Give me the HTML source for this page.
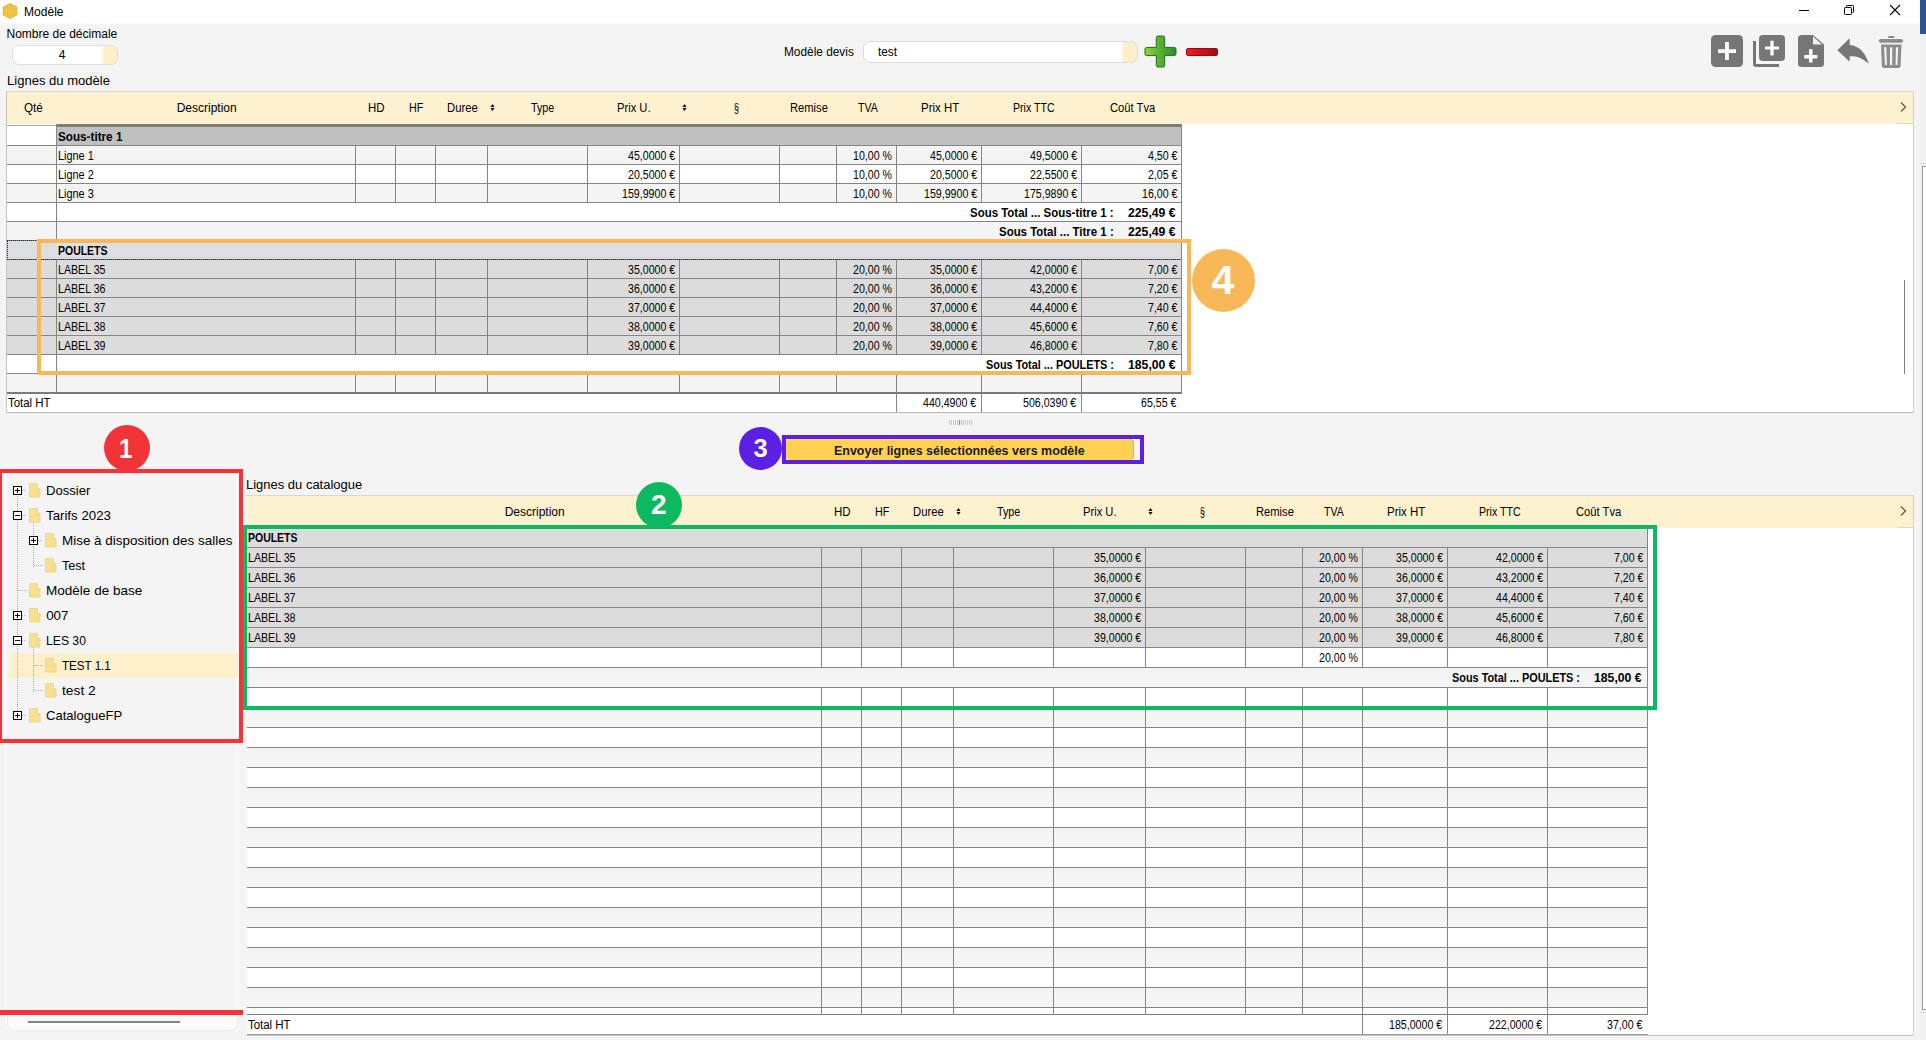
<!DOCTYPE html>
<html lang="fr"><head><meta charset="utf-8"><title>Modèle</title><style>
html,body{margin:0;padding:0}
body{width:1926px;height:1040px;overflow:hidden;position:relative;background:#f4f4f4;font-family:"Liberation Sans",sans-serif;color:#000}
body>div,body>svg,body>span{position:absolute;display:block}
.t{white-space:nowrap;line-height:1;transform-origin:0 0}
</style></head>
<body>
<div style="left:0px;top:0px;width:1920px;height:22px;background:#ffffff;"></div>
<div style="left:0px;top:22px;width:1920px;height:3px;background:linear-gradient(#ffffff,#f4f4f4);"></div>
<svg style="left:2px;top:2px" width="17" height="18" viewBox="0 0 17 18"><defs><radialGradient id="hx" cx="0.5" cy="0.5" r="0.6"><stop offset="0" stop-color="#f1c64a"/><stop offset="0.75" stop-color="#ecc041"/><stop offset="1" stop-color="#d9b350"/></radialGradient></defs><path d="M8 1.2 L15 5 L15 13 L8 16.8 L1 13 L1 5 Z" fill="url(#hx)" stroke="#dcb64c" stroke-width="0.6" stroke-linejoin="round"/></svg>
<span class="t" style="left:23.50px;top:6.14px;font-size:12px;transform:scaleX(1.0036);">Modèle</span>
<div style="left:1799px;top:10px;width:10px;height:1px;background:#000;"></div>
<svg style="left:1843px;top:4px" width="13" height="13" viewBox="0 0 13 13" fill="none" stroke="#000" stroke-width="1"><rect x="1.5" y="3.5" width="7" height="7" rx="0.8"/><path d="M3.5 3.5 V2.3 a0.8 0.8 0 0 1 0.8 -0.8 H9.7 a0.8 0.8 0 0 1 0.8 0.8 V7.7 a0.8 0.8 0 0 1 -0.8 0.8 H8.5"/></svg>
<svg style="left:1889px;top:4px" width="12" height="12" viewBox="0 0 12 12" stroke="#000" stroke-width="1.1"><path d="M1 1 L11 11 M11 1 L1 11"/></svg>
<div style="left:1920px;top:0px;width:6px;height:33.5px;background:#2f5496;"></div>
<div style="left:1920px;top:33.5px;width:6px;height:1007px;background:#f0f0f0;"></div>
<div style="left:1920px;top:163px;width:6px;height:1px;background:#dcdcdc;"></div>
<div style="left:1922px;top:166px;width:6px;height:844px;background:#fdfdfd;border:1px solid #9a9a9a;box-sizing:border-box;"></div>
<div style="left:1920px;top:1012px;width:6px;height:1px;background:#dcdcdc;"></div>
<span class="t" style="left:6.50px;top:27.64px;font-size:12px;">Nombre de décimale</span>
<div style="left:12px;top:45px;width:106px;height:20px;background:linear-gradient(90deg,#fff 0,#fff 88px,#fdefc9 91px);border:1px solid #dedede;border-radius:7px;box-sizing:border-box;"></div>
<span class="t" style="left:58.66px;top:48.64px;font-size:12px;">4</span>
<span class="t" style="left:6.50px;top:74.84px;font-size:12px;transform:scaleX(1.0872);">Lignes du modèle</span>
<span class="t" style="left:784.20px;top:46.04px;font-size:12px;transform:scaleX(0.9872);">Modèle devis</span>
<div style="left:863px;top:41px;width:275px;height:22px;background:linear-gradient(90deg,#fff 0,#fff 257px,#fdefc9 260px);border:1px solid #dcdcdc;border-radius:7px;box-sizing:border-box;"></div>
<span class="t" style="left:878.00px;top:46.04px;font-size:12px;transform:scaleX(0.9823);">test</span>
<svg style="left:1143.5px;top:34.5px" width="33" height="33" viewBox="0 0 33 33"><defs><linearGradient id="gp" x1="0" y1="0" x2="1" y2="0"><stop offset="0" stop-color="#96d640"/><stop offset="0.45" stop-color="#5cb230"/><stop offset="1" stop-color="#2c8c34"/></linearGradient></defs><path d="M13.9 1 h5.2 a1.6 1.6 0 0 1 1.6 1.6 v9.8 h9.7 a1.6 1.6 0 0 1 1.6 1.6 v5 a1.6 1.6 0 0 1 -1.6 1.6 h-9.7 v9.8 a1.6 1.6 0 0 1 -1.6 1.6 h-5.2 a1.6 1.6 0 0 1 -1.6 -1.6 v-9.8 h-9.7 a1.6 1.6 0 0 1 -1.6 -1.6 v-5 a1.6 1.6 0 0 1 1.6 -1.6 h9.7 v-9.8 a1.6 1.6 0 0 1 1.6 -1.6 z" fill="url(#gp)" stroke="#1f6e1c" stroke-width="1"/></svg>
<div style="left:1186px;top:48px;width:32px;height:8px;border-radius:2px;background:linear-gradient(90deg,#f41c1c,#d41218 45%,#9c1018);border:1px solid #8e0c12;box-sizing:border-box;"></div>
<svg style="left:1711px;top:35px" width="32" height="32" viewBox="0 0 32 32"><rect width="32" height="32" rx="4.5" fill="#767676"/><path d="M7 14.2 H25 V18 H7 Z M14.1 7 H17.9 V25 H14.1 Z" fill="#fff"/></svg>
<svg style="left:1753px;top:35px" width="32" height="32" viewBox="0 0 32 32"><rect x="6" y="0" width="26" height="26" rx="4" fill="#767676"/><path d="M1.5 6 V29 a1.5 1.5 0 0 0 1.5 1.5 H26" fill="none" stroke="#767676" stroke-width="3"/><path d="M12 11.5 H26 V14.6 H12 Z M17.4 5.8 H20.6 V20.6 H17.4 Z" fill="#fff"/></svg>
<svg style="left:1798px;top:35px" width="26" height="32" viewBox="0 0 26 32"><path d="M3.5 0 H15 L26 9.5 V28.5 a3.5 3.5 0 0 1 -3.5 3.5 H3.5 a3.5 3.5 0 0 1 -3.5 -3.5 V3.5 a3.5 3.5 0 0 1 3.5 -3.5 z" fill="#767676"/><path d="M15 1.5 V9.5 H24 Z" fill="#f0f0f0"/><path d="M6.3 20 H19.3 V23.4 H6.3 Z M11.1 14.3 H14.5 V27.6 H11.1 Z" fill="#fff"/></svg>
<svg style="left:1837px;top:38px" width="33" height="27" viewBox="0 0 33 27"><path d="M12.7 0.25 L0.4 12.3 L12.7 23.7 V18.2 C19 18 25 19.5 31.7 25.8 C29.5 17 23 7.5 12.7 7 Z" fill="#767676"/></svg>
<svg style="left:1878px;top:35px" width="26" height="34" viewBox="0 0 26 34"><g fill="#8c8c8c"><rect x="10" y="1.1" width="6.5" height="2" rx="1"/><rect x="0.9" y="4.1" width="24.1" height="3.6" rx="1.7"/><path d="M3 9.4 H23.5 L22.6 31 a2 2 0 0 1 -2 1.9 H5.9 a2 2 0 0 1 -2 -1.9 Z"/></g><g fill="#f4f4f4"><path d="M6.1 12.3 H8.3 L8.9 30.1 H7 Z"/><path d="M12 12.3 H14.2 V30.1 H12 Z"/><path d="M18 12.3 H20.2 L19.4 30.1 H17.5 Z"/></g></svg>
<div style="left:7px;top:92px;width:1906px;height:320px;background:#ffffff;"></div>
<div style="left:6px;top:91px;width:1908px;height:1px;background:#dcd6cc;"></div>
<div style="left:6px;top:92px;width:1px;height:321px;background:#c4c4c4;"></div>
<div style="left:1913px;top:92px;width:1px;height:321px;background:#d2d2d2;"></div>
<div style="left:7px;top:412px;width:1907px;height:1px;background:#b8b8b8;"></div>
<div style="left:7px;top:92px;width:1906px;height:31.5px;background:#fef1cf;"></div>
<svg style="left:1899px;top:101px" width="9" height="12" viewBox="0 0 9 12" fill="none" stroke="#5a5548" stroke-width="1.2"><path d="M2 1.5 L6.5 6 L2 10.5"/></svg>
<div style="left:1897px;top:122.5px;width:16px;height:1px;background:#ecd9a0;"></div>
<div style="left:1904px;top:280px;width:1px;height:94px;background:#7d7d7d;"></div>
<span class="t" style="left:23.52px;top:102.24px;font-size:12px;transform:scaleX(0.9694);">Qté</span>
<span class="t" style="left:176.70px;top:102.24px;font-size:12px;">Description</span>
<span class="t" style="left:367.90px;top:102.24px;font-size:12px;transform:scaleX(0.9577);">HD</span>
<span class="t" style="left:409.05px;top:102.24px;font-size:12px;transform:scaleX(0.8939);">HF</span>
<span class="t" style="left:446.85px;top:102.24px;font-size:12px;transform:scaleX(0.9393);">Duree</span>
<span class="t" style="left:531.15px;top:102.24px;font-size:12px;transform:scaleX(0.8956);">Type</span>
<span class="t" style="left:617.45px;top:102.24px;font-size:12px;transform:scaleX(0.9305);">Prix U.</span>
<span class="t" style="left:734.00px;top:102.24px;font-size:12px;transform:scaleX(0.7492);">§</span>
<span class="t" style="left:789.75px;top:102.24px;font-size:12px;transform:scaleX(0.9317);">Remise</span>
<span class="t" style="left:858.35px;top:102.24px;font-size:12px;transform:scaleX(0.8776);">TVA</span>
<span class="t" style="left:920.60px;top:102.24px;font-size:12px;transform:scaleX(0.9551);">Prix HT</span>
<span class="t" style="left:1012.60px;top:102.24px;font-size:12px;transform:scaleX(0.8830);">Prix TTC</span>
<span class="t" style="left:1110.20px;top:102.24px;font-size:12px;transform:scaleX(0.9325);">Coût Tva</span>
<svg style="left:489.7px;top:104px" width="5" height="7" viewBox="0 0 5 7"><path d="M2.5 0 L4.6 2.9 H0.4 Z M2.5 7 L4.6 4.1 H0.4 Z" fill="#111"/></svg>
<svg style="left:681.7px;top:104px" width="5" height="7" viewBox="0 0 5 7"><path d="M2.5 0 L4.6 2.9 H0.4 Z M2.5 7 L4.6 4.1 H0.4 Z" fill="#111"/></svg>
<div style="left:7px;top:126px;width:49px;height:19px;background:#ffffff;"></div>
<div style="left:57px;top:126px;width:1125px;height:19px;background:#c0c0c0;"></div>
<span class="t" style="left:58.20px;top:131.14px;font-size:12px;transform:scaleX(0.9755);font-weight:bold;">Sous-titre 1</span>
<div style="left:7px;top:145px;width:1175px;height:1px;background:#858585;"></div>
<div style="left:7px;top:146px;width:1175px;height:19px;background:#f4f4f4;"></div>
<span class="t" style="left:58.30px;top:149.74px;font-size:12px;transform:scaleX(0.9070);">Ligne 1</span>
<span class="t" style="left:627.55px;top:149.74px;font-size:12px;transform:scaleX(0.8850);">45,0000 €</span>
<span class="t" style="left:852.63px;top:149.74px;font-size:12px;transform:scaleX(0.8850);">10,00 %</span>
<span class="t" style="left:929.55px;top:149.74px;font-size:12px;transform:scaleX(0.8850);">45,0000 €</span>
<span class="t" style="left:1029.55px;top:149.74px;font-size:12px;transform:scaleX(0.8850);">49,5000 €</span>
<span class="t" style="left:1147.77px;top:149.74px;font-size:12px;transform:scaleX(0.8850);">4,50 €</span>
<div style="left:355px;top:146px;width:1px;height:19px;background:#858585;"></div>
<div style="left:395px;top:146px;width:1px;height:19px;background:#858585;"></div>
<div style="left:435px;top:146px;width:1px;height:19px;background:#858585;"></div>
<div style="left:487px;top:146px;width:1px;height:19px;background:#858585;"></div>
<div style="left:587px;top:146px;width:1px;height:19px;background:#858585;"></div>
<div style="left:679px;top:146px;width:1px;height:19px;background:#858585;"></div>
<div style="left:779px;top:146px;width:1px;height:19px;background:#858585;"></div>
<div style="left:836px;top:146px;width:1px;height:19px;background:#858585;"></div>
<div style="left:896px;top:146px;width:1px;height:19px;background:#858585;"></div>
<div style="left:981px;top:146px;width:1px;height:19px;background:#858585;"></div>
<div style="left:1081px;top:146px;width:1px;height:19px;background:#858585;"></div>
<div style="left:7px;top:164px;width:1175px;height:1px;background:#858585;"></div>
<div style="left:7px;top:165px;width:1175px;height:19px;background:#ffffff;"></div>
<span class="t" style="left:58.30px;top:168.74px;font-size:12px;transform:scaleX(0.9070);">Ligne 2</span>
<span class="t" style="left:627.55px;top:168.74px;font-size:12px;transform:scaleX(0.8850);">20,5000 €</span>
<span class="t" style="left:852.63px;top:168.74px;font-size:12px;transform:scaleX(0.8850);">10,00 %</span>
<span class="t" style="left:929.55px;top:168.74px;font-size:12px;transform:scaleX(0.8850);">20,5000 €</span>
<span class="t" style="left:1029.55px;top:168.74px;font-size:12px;transform:scaleX(0.8850);">22,5500 €</span>
<span class="t" style="left:1147.77px;top:168.74px;font-size:12px;transform:scaleX(0.8850);">2,05 €</span>
<div style="left:355px;top:165px;width:1px;height:19px;background:#858585;"></div>
<div style="left:395px;top:165px;width:1px;height:19px;background:#858585;"></div>
<div style="left:435px;top:165px;width:1px;height:19px;background:#858585;"></div>
<div style="left:487px;top:165px;width:1px;height:19px;background:#858585;"></div>
<div style="left:587px;top:165px;width:1px;height:19px;background:#858585;"></div>
<div style="left:679px;top:165px;width:1px;height:19px;background:#858585;"></div>
<div style="left:779px;top:165px;width:1px;height:19px;background:#858585;"></div>
<div style="left:836px;top:165px;width:1px;height:19px;background:#858585;"></div>
<div style="left:896px;top:165px;width:1px;height:19px;background:#858585;"></div>
<div style="left:981px;top:165px;width:1px;height:19px;background:#858585;"></div>
<div style="left:1081px;top:165px;width:1px;height:19px;background:#858585;"></div>
<div style="left:7px;top:183px;width:1175px;height:1px;background:#858585;"></div>
<div style="left:7px;top:184px;width:1175px;height:19px;background:#f4f4f4;"></div>
<span class="t" style="left:58.30px;top:187.74px;font-size:12px;transform:scaleX(0.9070);">Ligne 3</span>
<span class="t" style="left:621.65px;top:187.74px;font-size:12px;transform:scaleX(0.8850);">159,9900 €</span>
<span class="t" style="left:852.63px;top:187.74px;font-size:12px;transform:scaleX(0.8850);">10,00 %</span>
<span class="t" style="left:923.65px;top:187.74px;font-size:12px;transform:scaleX(0.8850);">159,9900 €</span>
<span class="t" style="left:1023.65px;top:187.74px;font-size:12px;transform:scaleX(0.8850);">175,9890 €</span>
<span class="t" style="left:1141.87px;top:187.74px;font-size:12px;transform:scaleX(0.8850);">16,00 €</span>
<div style="left:355px;top:184px;width:1px;height:19px;background:#858585;"></div>
<div style="left:395px;top:184px;width:1px;height:19px;background:#858585;"></div>
<div style="left:435px;top:184px;width:1px;height:19px;background:#858585;"></div>
<div style="left:487px;top:184px;width:1px;height:19px;background:#858585;"></div>
<div style="left:587px;top:184px;width:1px;height:19px;background:#858585;"></div>
<div style="left:679px;top:184px;width:1px;height:19px;background:#858585;"></div>
<div style="left:779px;top:184px;width:1px;height:19px;background:#858585;"></div>
<div style="left:836px;top:184px;width:1px;height:19px;background:#858585;"></div>
<div style="left:896px;top:184px;width:1px;height:19px;background:#858585;"></div>
<div style="left:981px;top:184px;width:1px;height:19px;background:#858585;"></div>
<div style="left:1081px;top:184px;width:1px;height:19px;background:#858585;"></div>
<div style="left:7px;top:202px;width:1175px;height:1px;background:#858585;"></div>
<div style="left:7px;top:203px;width:1175px;height:19px;background:#ffffff;"></div>
<span class="t" style="left:970.00px;top:206.74px;font-size:12px;transform:scaleX(0.9544);font-weight:bold;">Sous Total ... Sous-titre 1 :</span>
<span class="t" style="left:1128.20px;top:206.74px;font-size:12px;transform:scaleX(1.0190);font-weight:bold;">225,49 €</span>
<div style="left:7px;top:221px;width:1175px;height:1px;background:#858585;"></div>
<div style="left:7px;top:222px;width:1175px;height:19px;background:#f4f4f4;"></div>
<span class="t" style="left:998.90px;top:225.74px;font-size:12px;transform:scaleX(0.9539);font-weight:bold;">Sous Total ... Titre 1 :</span>
<span class="t" style="left:1128.20px;top:225.74px;font-size:12px;transform:scaleX(1.0190);font-weight:bold;">225,49 €</span>
<div style="left:7px;top:240px;width:1175px;height:1px;background:#858585;"></div>
<div style="left:7px;top:241px;width:1175px;height:19px;background:#dddee2;"></div>
<span class="t" style="left:58.20px;top:244.74px;font-size:12px;transform:scaleX(0.8734);font-weight:bold;">POULETS</span>
<div style="left:7px;top:259px;width:1175px;height:1px;background:#858585;"></div>
<div style="left:7px;top:260px;width:1175px;height:19px;background:#dcdcdc;"></div>
<span class="t" style="left:58.30px;top:263.74px;font-size:12px;transform:scaleX(0.8860);">LABEL 35</span>
<span class="t" style="left:627.55px;top:263.74px;font-size:12px;transform:scaleX(0.8850);">35,0000 €</span>
<span class="t" style="left:852.63px;top:263.74px;font-size:12px;transform:scaleX(0.8850);">20,00 %</span>
<span class="t" style="left:929.55px;top:263.74px;font-size:12px;transform:scaleX(0.8850);">35,0000 €</span>
<span class="t" style="left:1029.55px;top:263.74px;font-size:12px;transform:scaleX(0.8850);">42,0000 €</span>
<span class="t" style="left:1147.77px;top:263.74px;font-size:12px;transform:scaleX(0.8850);">7,00 €</span>
<div style="left:355px;top:260px;width:1px;height:19px;background:#858585;"></div>
<div style="left:395px;top:260px;width:1px;height:19px;background:#858585;"></div>
<div style="left:435px;top:260px;width:1px;height:19px;background:#858585;"></div>
<div style="left:487px;top:260px;width:1px;height:19px;background:#858585;"></div>
<div style="left:587px;top:260px;width:1px;height:19px;background:#858585;"></div>
<div style="left:679px;top:260px;width:1px;height:19px;background:#858585;"></div>
<div style="left:779px;top:260px;width:1px;height:19px;background:#858585;"></div>
<div style="left:836px;top:260px;width:1px;height:19px;background:#858585;"></div>
<div style="left:896px;top:260px;width:1px;height:19px;background:#858585;"></div>
<div style="left:981px;top:260px;width:1px;height:19px;background:#858585;"></div>
<div style="left:1081px;top:260px;width:1px;height:19px;background:#858585;"></div>
<div style="left:7px;top:278px;width:1175px;height:1px;background:#858585;"></div>
<div style="left:7px;top:279px;width:1175px;height:19px;background:#dcdcdc;"></div>
<span class="t" style="left:58.30px;top:282.74px;font-size:12px;transform:scaleX(0.8860);">LABEL 36</span>
<span class="t" style="left:627.55px;top:282.74px;font-size:12px;transform:scaleX(0.8850);">36,0000 €</span>
<span class="t" style="left:852.63px;top:282.74px;font-size:12px;transform:scaleX(0.8850);">20,00 %</span>
<span class="t" style="left:929.55px;top:282.74px;font-size:12px;transform:scaleX(0.8850);">36,0000 €</span>
<span class="t" style="left:1029.55px;top:282.74px;font-size:12px;transform:scaleX(0.8850);">43,2000 €</span>
<span class="t" style="left:1147.77px;top:282.74px;font-size:12px;transform:scaleX(0.8850);">7,20 €</span>
<div style="left:355px;top:279px;width:1px;height:19px;background:#858585;"></div>
<div style="left:395px;top:279px;width:1px;height:19px;background:#858585;"></div>
<div style="left:435px;top:279px;width:1px;height:19px;background:#858585;"></div>
<div style="left:487px;top:279px;width:1px;height:19px;background:#858585;"></div>
<div style="left:587px;top:279px;width:1px;height:19px;background:#858585;"></div>
<div style="left:679px;top:279px;width:1px;height:19px;background:#858585;"></div>
<div style="left:779px;top:279px;width:1px;height:19px;background:#858585;"></div>
<div style="left:836px;top:279px;width:1px;height:19px;background:#858585;"></div>
<div style="left:896px;top:279px;width:1px;height:19px;background:#858585;"></div>
<div style="left:981px;top:279px;width:1px;height:19px;background:#858585;"></div>
<div style="left:1081px;top:279px;width:1px;height:19px;background:#858585;"></div>
<div style="left:7px;top:297px;width:1175px;height:1px;background:#858585;"></div>
<div style="left:7px;top:298px;width:1175px;height:19px;background:#dcdcdc;"></div>
<span class="t" style="left:58.30px;top:301.74px;font-size:12px;transform:scaleX(0.8860);">LABEL 37</span>
<span class="t" style="left:627.55px;top:301.74px;font-size:12px;transform:scaleX(0.8850);">37,0000 €</span>
<span class="t" style="left:852.63px;top:301.74px;font-size:12px;transform:scaleX(0.8850);">20,00 %</span>
<span class="t" style="left:929.55px;top:301.74px;font-size:12px;transform:scaleX(0.8850);">37,0000 €</span>
<span class="t" style="left:1029.55px;top:301.74px;font-size:12px;transform:scaleX(0.8850);">44,4000 €</span>
<span class="t" style="left:1147.77px;top:301.74px;font-size:12px;transform:scaleX(0.8850);">7,40 €</span>
<div style="left:355px;top:298px;width:1px;height:19px;background:#858585;"></div>
<div style="left:395px;top:298px;width:1px;height:19px;background:#858585;"></div>
<div style="left:435px;top:298px;width:1px;height:19px;background:#858585;"></div>
<div style="left:487px;top:298px;width:1px;height:19px;background:#858585;"></div>
<div style="left:587px;top:298px;width:1px;height:19px;background:#858585;"></div>
<div style="left:679px;top:298px;width:1px;height:19px;background:#858585;"></div>
<div style="left:779px;top:298px;width:1px;height:19px;background:#858585;"></div>
<div style="left:836px;top:298px;width:1px;height:19px;background:#858585;"></div>
<div style="left:896px;top:298px;width:1px;height:19px;background:#858585;"></div>
<div style="left:981px;top:298px;width:1px;height:19px;background:#858585;"></div>
<div style="left:1081px;top:298px;width:1px;height:19px;background:#858585;"></div>
<div style="left:7px;top:316px;width:1175px;height:1px;background:#858585;"></div>
<div style="left:7px;top:317px;width:1175px;height:19px;background:#dcdcdc;"></div>
<span class="t" style="left:58.30px;top:320.74px;font-size:12px;transform:scaleX(0.8860);">LABEL 38</span>
<span class="t" style="left:627.55px;top:320.74px;font-size:12px;transform:scaleX(0.8850);">38,0000 €</span>
<span class="t" style="left:852.63px;top:320.74px;font-size:12px;transform:scaleX(0.8850);">20,00 %</span>
<span class="t" style="left:929.55px;top:320.74px;font-size:12px;transform:scaleX(0.8850);">38,0000 €</span>
<span class="t" style="left:1029.55px;top:320.74px;font-size:12px;transform:scaleX(0.8850);">45,6000 €</span>
<span class="t" style="left:1147.77px;top:320.74px;font-size:12px;transform:scaleX(0.8850);">7,60 €</span>
<div style="left:355px;top:317px;width:1px;height:19px;background:#858585;"></div>
<div style="left:395px;top:317px;width:1px;height:19px;background:#858585;"></div>
<div style="left:435px;top:317px;width:1px;height:19px;background:#858585;"></div>
<div style="left:487px;top:317px;width:1px;height:19px;background:#858585;"></div>
<div style="left:587px;top:317px;width:1px;height:19px;background:#858585;"></div>
<div style="left:679px;top:317px;width:1px;height:19px;background:#858585;"></div>
<div style="left:779px;top:317px;width:1px;height:19px;background:#858585;"></div>
<div style="left:836px;top:317px;width:1px;height:19px;background:#858585;"></div>
<div style="left:896px;top:317px;width:1px;height:19px;background:#858585;"></div>
<div style="left:981px;top:317px;width:1px;height:19px;background:#858585;"></div>
<div style="left:1081px;top:317px;width:1px;height:19px;background:#858585;"></div>
<div style="left:7px;top:335px;width:1175px;height:1px;background:#858585;"></div>
<div style="left:7px;top:336px;width:1175px;height:19px;background:#dcdcdc;"></div>
<span class="t" style="left:58.30px;top:339.74px;font-size:12px;transform:scaleX(0.8860);">LABEL 39</span>
<span class="t" style="left:627.55px;top:339.74px;font-size:12px;transform:scaleX(0.8850);">39,0000 €</span>
<span class="t" style="left:852.63px;top:339.74px;font-size:12px;transform:scaleX(0.8850);">20,00 %</span>
<span class="t" style="left:929.55px;top:339.74px;font-size:12px;transform:scaleX(0.8850);">39,0000 €</span>
<span class="t" style="left:1029.55px;top:339.74px;font-size:12px;transform:scaleX(0.8850);">46,8000 €</span>
<span class="t" style="left:1147.77px;top:339.74px;font-size:12px;transform:scaleX(0.8850);">7,80 €</span>
<div style="left:355px;top:336px;width:1px;height:19px;background:#858585;"></div>
<div style="left:395px;top:336px;width:1px;height:19px;background:#858585;"></div>
<div style="left:435px;top:336px;width:1px;height:19px;background:#858585;"></div>
<div style="left:487px;top:336px;width:1px;height:19px;background:#858585;"></div>
<div style="left:587px;top:336px;width:1px;height:19px;background:#858585;"></div>
<div style="left:679px;top:336px;width:1px;height:19px;background:#858585;"></div>
<div style="left:779px;top:336px;width:1px;height:19px;background:#858585;"></div>
<div style="left:836px;top:336px;width:1px;height:19px;background:#858585;"></div>
<div style="left:896px;top:336px;width:1px;height:19px;background:#858585;"></div>
<div style="left:981px;top:336px;width:1px;height:19px;background:#858585;"></div>
<div style="left:1081px;top:336px;width:1px;height:19px;background:#858585;"></div>
<div style="left:7px;top:354px;width:1175px;height:1px;background:#858585;"></div>
<div style="left:7px;top:355px;width:1175px;height:19px;background:#ffffff;"></div>
<span class="t" style="left:985.60px;top:358.74px;font-size:12px;transform:scaleX(0.9070);font-weight:bold;">Sous Total ... POULETS :</span>
<span class="t" style="left:1128.20px;top:358.74px;font-size:12px;transform:scaleX(1.0190);font-weight:bold;">185,00 €</span>
<div style="left:7px;top:373px;width:1175px;height:1px;background:#858585;"></div>
<div style="left:7px;top:374px;width:1175px;height:19px;background:#f4f4f4;"></div>
<div style="left:355px;top:374px;width:1px;height:19px;background:#858585;"></div>
<div style="left:395px;top:374px;width:1px;height:19px;background:#858585;"></div>
<div style="left:435px;top:374px;width:1px;height:19px;background:#858585;"></div>
<div style="left:487px;top:374px;width:1px;height:19px;background:#858585;"></div>
<div style="left:587px;top:374px;width:1px;height:19px;background:#858585;"></div>
<div style="left:679px;top:374px;width:1px;height:19px;background:#858585;"></div>
<div style="left:779px;top:374px;width:1px;height:19px;background:#858585;"></div>
<div style="left:836px;top:374px;width:1px;height:19px;background:#858585;"></div>
<div style="left:896px;top:374px;width:1px;height:19px;background:#858585;"></div>
<div style="left:981px;top:374px;width:1px;height:19px;background:#858585;"></div>
<div style="left:1081px;top:374px;width:1px;height:19px;background:#858585;"></div>
<div style="left:57px;top:124px;width:1125px;height:2.6px;background:#7f7c78;"></div>
<div style="left:7px;top:125px;width:50px;height:1px;background:#a6a6a6;"></div>
<div style="left:56px;top:124px;width:1px;height:269px;background:#858585;"></div>
<div style="left:1181px;top:126px;width:1px;height:286px;background:#858585;"></div>
<div style="left:7px;top:240px;width:1175px;height:20px;border:1px dotted #222;box-sizing:border-box;background:none"></div>
<div style="left:1181px;top:240px;width:1px;height:20px;background:#858585;"></div>
<div style="left:56px;top:241px;width:1px;height:18px;background:#dddee2;"></div>
<div style="left:7px;top:392px;width:1175px;height:2px;background:#7a7a7a;"></div>
<div style="left:7px;top:394px;width:1175px;height:18px;background:#ffffff;"></div>
<span class="t" style="left:8.40px;top:397.44px;font-size:12px;transform:scaleX(0.9512);">Total HT</span>
<div style="left:896px;top:394px;width:1px;height:18px;background:#858585;"></div>
<div style="left:981px;top:394px;width:1px;height:18px;background:#858585;"></div>
<div style="left:1081px;top:394px;width:1px;height:18px;background:#858585;"></div>
<span class="t" style="left:923.05px;top:397.44px;font-size:12px;transform:scaleX(0.8850);">440,4900 €</span>
<span class="t" style="left:1023.05px;top:397.44px;font-size:12px;transform:scaleX(0.8850);">506,0390 €</span>
<span class="t" style="left:1141.27px;top:397.44px;font-size:12px;transform:scaleX(0.8850);">65,55 €</span>
<div style="left:37px;top:239.2px;width:1154px;height:136px;border:4px solid #f9b858;box-sizing:border-box;background:none"></div>
<div style="left:1191.5px;top:248.8px;width:63px;height:63px;border-radius:50%;background:#f9b858"></div>
<span class="t" style="left:1211.40px;top:260.29px;font-size:41px;font-weight:bold;color:#fff;">4</span>
<div style="left:949px;top:420px;width:1px;height:5px;background:#c9c9c9;"></div>
<div style="left:951px;top:420px;width:1px;height:5px;background:#c9c9c9;"></div>
<div style="left:953px;top:420px;width:1px;height:5px;background:#c9c9c9;"></div>
<div style="left:955px;top:420px;width:1px;height:5px;background:#c9c9c9;"></div>
<div style="left:957px;top:420px;width:1px;height:5px;background:#c9c9c9;"></div>
<div style="left:959px;top:420px;width:1px;height:5px;background:#4f9fc0;"></div>
<div style="left:961px;top:420px;width:1px;height:5px;background:#9cc6d8;"></div>
<div style="left:963px;top:420px;width:1px;height:5px;background:#c9c9c9;"></div>
<div style="left:965px;top:420px;width:1px;height:5px;background:#c9c9c9;"></div>
<div style="left:967px;top:420px;width:1px;height:5px;background:#c9c9c9;"></div>
<div style="left:969px;top:420px;width:1px;height:5px;background:#c9c9c9;"></div>
<div style="left:971px;top:420px;width:1px;height:5px;background:#c9c9c9;"></div>
<div style="left:739px;top:426.8px;width:43px;height:43px;border-radius:50%;background:#5b20e4"></div>
<span class="t" style="left:753.51px;top:436.01px;font-size:25.5px;font-weight:bold;color:#fff;">3</span>
<div style="left:782px;top:434.8px;width:362px;height:29.4px;border:4px solid #5b20e4;box-sizing:border-box;background:none"></div>
<div style="left:786.3px;top:439.3px;width:348px;height:20.6px;border-radius:4px;background:#ffd152;box-shadow:inset -1px 0 0 #c9b070"></div>
<span class="t" style="left:834.20px;top:445.14px;font-size:12px;transform:scaleX(1.0383);font-weight:bold;color:#1a1a1a;">Envoyer lignes sélectionnées vers modèle</span>
<div style="left:5px;top:472px;width:2px;height:559px;background:#fafafa;"></div>
<div style="left:236px;top:472px;width:2px;height:559px;background:#f9f9f9;"></div>
<div style="left:10px;top:653.3px;width:228px;height:24.6px;background:#fef0cb;"></div>
<div style="left:17px;top:496px;width:1px;height:215px;background:repeating-linear-gradient(180deg,#a8a8a8 0,#a8a8a8 1px,transparent 1px,transparent 2px);"></div>
<div style="left:33px;top:522px;width:1px;height:45px;background:repeating-linear-gradient(180deg,#a8a8a8 0,#a8a8a8 1px,transparent 1px,transparent 2px);"></div>
<div style="left:33px;top:647px;width:1px;height:45px;background:repeating-linear-gradient(180deg,#a8a8a8 0,#a8a8a8 1px,transparent 1px,transparent 2px);"></div>
<div style="left:22px;top:490px;width:4px;height:1px;background:repeating-linear-gradient(90deg,#a8a8a8 0,#a8a8a8 1px,transparent 1px,transparent 2px);"></div>
<svg style="left:13px;top:486px" width="9" height="9" viewBox="0 0 9 9"><rect x="0.5" y="0.5" width="8" height="8" fill="#fff" stroke="#000"/><path d="M2 4.5 H7 M4.5 2 V7" stroke="#000" stroke-width="1"/></svg>
<svg style="left:29px;top:482.9px" width="12" height="15" viewBox="0 0 12 15"><path d="M0.5 0.5 H8.5 V5.5 H11 V14 H0.5 Z" fill="#f8e092" stroke="#ecd27c" stroke-width="0.8"/><path d="M8 6 V13.5" stroke="#ecd27c" stroke-width="0.7"/></svg>
<span class="t" style="left:46.20px;top:484.02px;font-size:13.33px;transform:scaleX(0.9826);">Dossier</span>
<div style="left:22px;top:515px;width:4px;height:1px;background:repeating-linear-gradient(90deg,#a8a8a8 0,#a8a8a8 1px,transparent 1px,transparent 2px);"></div>
<svg style="left:13px;top:511px" width="9" height="9" viewBox="0 0 9 9"><rect x="0.5" y="0.5" width="8" height="8" fill="#fff" stroke="#000"/><path d="M2 4.5 H7 " stroke="#000" stroke-width="1"/></svg>
<svg style="left:29px;top:507.9px" width="12" height="15" viewBox="0 0 12 15"><path d="M0.5 0.5 H8.5 V5.5 H11 V14 H0.5 Z" fill="#f8e092" stroke="#ecd27c" stroke-width="0.8"/><path d="M8 6 V13.5" stroke="#ecd27c" stroke-width="0.7"/></svg>
<span class="t" style="left:46.20px;top:509.02px;font-size:13.33px;transform:scaleX(0.9953);">Tarifs 2023</span>
<div style="left:38px;top:540px;width:4px;height:1px;background:repeating-linear-gradient(90deg,#a8a8a8 0,#a8a8a8 1px,transparent 1px,transparent 2px);"></div>
<svg style="left:29px;top:536px" width="9" height="9" viewBox="0 0 9 9"><rect x="0.5" y="0.5" width="8" height="8" fill="#fff" stroke="#000"/><path d="M2 4.5 H7 M4.5 2 V7" stroke="#000" stroke-width="1"/></svg>
<svg style="left:45px;top:532.9px" width="12" height="15" viewBox="0 0 12 15"><path d="M0.5 0.5 H8.5 V5.5 H11 V14 H0.5 Z" fill="#f8e092" stroke="#ecd27c" stroke-width="0.8"/><path d="M8 6 V13.5" stroke="#ecd27c" stroke-width="0.7"/></svg>
<span class="t" style="left:62.20px;top:534.02px;font-size:13.33px;transform:scaleX(1.0087);">Mise à disposition des salles</span>
<div style="left:34px;top:565px;width:9px;height:1px;background:repeating-linear-gradient(90deg,#a8a8a8 0,#a8a8a8 1px,transparent 1px,transparent 2px);"></div>
<svg style="left:45px;top:557.9px" width="12" height="15" viewBox="0 0 12 15"><path d="M0.5 0.5 H8.5 V5.5 H11 V14 H0.5 Z" fill="#f8e092" stroke="#ecd27c" stroke-width="0.8"/><path d="M8 6 V13.5" stroke="#ecd27c" stroke-width="0.7"/></svg>
<span class="t" style="left:62.20px;top:559.02px;font-size:13.33px;transform:scaleX(0.9449);">Test</span>
<div style="left:18px;top:590px;width:9px;height:1px;background:repeating-linear-gradient(90deg,#a8a8a8 0,#a8a8a8 1px,transparent 1px,transparent 2px);"></div>
<svg style="left:29px;top:582.9px" width="12" height="15" viewBox="0 0 12 15"><path d="M0.5 0.5 H8.5 V5.5 H11 V14 H0.5 Z" fill="#f8e092" stroke="#ecd27c" stroke-width="0.8"/><path d="M8 6 V13.5" stroke="#ecd27c" stroke-width="0.7"/></svg>
<span class="t" style="left:46.20px;top:584.02px;font-size:13.33px;transform:scaleX(1.0152);">Modèle de base</span>
<div style="left:22px;top:615px;width:4px;height:1px;background:repeating-linear-gradient(90deg,#a8a8a8 0,#a8a8a8 1px,transparent 1px,transparent 2px);"></div>
<svg style="left:13px;top:611px" width="9" height="9" viewBox="0 0 9 9"><rect x="0.5" y="0.5" width="8" height="8" fill="#fff" stroke="#000"/><path d="M2 4.5 H7 M4.5 2 V7" stroke="#000" stroke-width="1"/></svg>
<svg style="left:29px;top:607.9px" width="12" height="15" viewBox="0 0 12 15"><path d="M0.5 0.5 H8.5 V5.5 H11 V14 H0.5 Z" fill="#f8e092" stroke="#ecd27c" stroke-width="0.8"/><path d="M8 6 V13.5" stroke="#ecd27c" stroke-width="0.7"/></svg>
<span class="t" style="left:46.20px;top:609.02px;font-size:13.33px;">007</span>
<div style="left:22px;top:640px;width:4px;height:1px;background:repeating-linear-gradient(90deg,#a8a8a8 0,#a8a8a8 1px,transparent 1px,transparent 2px);"></div>
<svg style="left:13px;top:636px" width="9" height="9" viewBox="0 0 9 9"><rect x="0.5" y="0.5" width="8" height="8" fill="#fff" stroke="#000"/><path d="M2 4.5 H7 " stroke="#000" stroke-width="1"/></svg>
<svg style="left:29px;top:632.9px" width="12" height="15" viewBox="0 0 12 15"><path d="M0.5 0.5 H8.5 V5.5 H11 V14 H0.5 Z" fill="#f8e092" stroke="#ecd27c" stroke-width="0.8"/><path d="M8 6 V13.5" stroke="#ecd27c" stroke-width="0.7"/></svg>
<span class="t" style="left:46.20px;top:634.02px;font-size:13.33px;transform:scaleX(0.9125);">LES 30</span>
<div style="left:34px;top:665px;width:9px;height:1px;background:repeating-linear-gradient(90deg,#a8a8a8 0,#a8a8a8 1px,transparent 1px,transparent 2px);"></div>
<svg style="left:45px;top:657.9px" width="12" height="15" viewBox="0 0 12 15"><path d="M0.5 0.5 H8.5 V5.5 H11 V14 H0.5 Z" fill="#f8e092" stroke="#ecd27c" stroke-width="0.8"/><path d="M8 6 V13.5" stroke="#ecd27c" stroke-width="0.7"/></svg>
<span class="t" style="left:62.20px;top:659.02px;font-size:13.33px;transform:scaleX(0.8705);">TEST 1.1</span>
<div style="left:34px;top:690px;width:9px;height:1px;background:repeating-linear-gradient(90deg,#a8a8a8 0,#a8a8a8 1px,transparent 1px,transparent 2px);"></div>
<svg style="left:45px;top:682.9px" width="12" height="15" viewBox="0 0 12 15"><path d="M0.5 0.5 H8.5 V5.5 H11 V14 H0.5 Z" fill="#f8e092" stroke="#ecd27c" stroke-width="0.8"/><path d="M8 6 V13.5" stroke="#ecd27c" stroke-width="0.7"/></svg>
<span class="t" style="left:62.20px;top:684.02px;font-size:13.33px;transform:scaleX(1.0367);">test 2</span>
<div style="left:22px;top:715px;width:4px;height:1px;background:repeating-linear-gradient(90deg,#a8a8a8 0,#a8a8a8 1px,transparent 1px,transparent 2px);"></div>
<svg style="left:13px;top:711px" width="9" height="9" viewBox="0 0 9 9"><rect x="0.5" y="0.5" width="8" height="8" fill="#fff" stroke="#000"/><path d="M2 4.5 H7 M4.5 2 V7" stroke="#000" stroke-width="1"/></svg>
<svg style="left:29px;top:707.9px" width="12" height="15" viewBox="0 0 12 15"><path d="M0.5 0.5 H8.5 V5.5 H11 V14 H0.5 Z" fill="#f8e092" stroke="#ecd27c" stroke-width="0.8"/><path d="M8 6 V13.5" stroke="#ecd27c" stroke-width="0.7"/></svg>
<span class="t" style="left:46.20px;top:709.02px;font-size:13.33px;transform:scaleX(0.9793);">CatalogueFP</span>
<div style="left:-2px;top:468.5px;width:244.7px;height:274.8px;border:4px solid #f23338;box-sizing:border-box;background:none"></div>
<div style="left:104px;top:424.5px;width:46px;height:46px;border-radius:50%;background:#f23338"></div>
<span class="t" style="left:119.30px;top:434.60px;font-size:28px;transform:scaleX(0.8600);font-weight:bold;color:#fff;">1</span>
<div style="left:7px;top:1012px;width:231px;height:19px;background:#fbfbfb;border-radius:0 0 8px 8px;border:1px solid #ececec;border-top:none;box-sizing:border-box"></div>
<div style="left:28px;top:1021px;width:152px;height:2px;background:#7f8886;"></div>
<div style="left:0px;top:1010.4px;width:242.7px;height:4.2px;background:#f23338;"></div>
<span class="t" style="left:246.30px;top:478.84px;font-size:12px;transform:scaleX(1.0817);">Lignes du catalogue</span>
<div style="left:247px;top:496px;width:1666px;height:539px;background:#ffffff;"></div>
<div style="left:246px;top:495px;width:1668px;height:1px;background:#dcd6cc;"></div>
<div style="left:1913px;top:496px;width:1px;height:540px;background:#d2d2d2;"></div>
<div style="left:247px;top:1035px;width:1667px;height:1px;background:#c4c4c4;"></div>
<div style="left:247px;top:496px;width:1666px;height:31.5px;background:#fef1cf;"></div>
<svg style="left:1899px;top:505px" width="9" height="12" viewBox="0 0 9 12" fill="none" stroke="#5a5548" stroke-width="1.2"><path d="M2 1.5 L6.5 6 L2 10.5"/></svg>
<div style="left:1897px;top:526.5px;width:16px;height:1px;background:#ecd9a0;"></div>
<span class="t" style="left:504.70px;top:506.24px;font-size:12px;">Description</span>
<span class="t" style="left:833.90px;top:506.24px;font-size:12px;transform:scaleX(0.9577);">HD</span>
<span class="t" style="left:875.05px;top:506.24px;font-size:12px;transform:scaleX(0.8939);">HF</span>
<span class="t" style="left:912.85px;top:506.24px;font-size:12px;transform:scaleX(0.9393);">Duree</span>
<span class="t" style="left:997.15px;top:506.24px;font-size:12px;transform:scaleX(0.8956);">Type</span>
<span class="t" style="left:1083.45px;top:506.24px;font-size:12px;transform:scaleX(0.9305);">Prix U.</span>
<span class="t" style="left:1200.00px;top:506.24px;font-size:12px;transform:scaleX(0.7492);">§</span>
<span class="t" style="left:1255.75px;top:506.24px;font-size:12px;transform:scaleX(0.9317);">Remise</span>
<span class="t" style="left:1324.35px;top:506.24px;font-size:12px;transform:scaleX(0.8776);">TVA</span>
<span class="t" style="left:1386.60px;top:506.24px;font-size:12px;transform:scaleX(0.9551);">Prix HT</span>
<span class="t" style="left:1478.60px;top:506.24px;font-size:12px;transform:scaleX(0.8830);">Prix TTC</span>
<span class="t" style="left:1576.20px;top:506.24px;font-size:12px;transform:scaleX(0.9325);">Coût Tva</span>
<svg style="left:955.7px;top:508px" width="5" height="7" viewBox="0 0 5 7"><path d="M2.5 0 L4.6 2.9 H0.4 Z M2.5 7 L4.6 4.1 H0.4 Z" fill="#111"/></svg>
<svg style="left:1147.7px;top:508px" width="5" height="7" viewBox="0 0 5 7"><path d="M2.5 0 L4.6 2.9 H0.4 Z M2.5 7 L4.6 4.1 H0.4 Z" fill="#111"/></svg>
<div style="left:247px;top:528px;width:1401px;height:19px;background:#dcdcdc;"></div>
<span class="t" style="left:248.30px;top:531.84px;font-size:12px;transform:scaleX(0.8734);font-weight:bold;">POULETS</span>
<div style="left:247px;top:547px;width:1401px;height:1px;background:#858585;"></div>
<div style="left:247px;top:548px;width:1401px;height:19px;background:#dcdcdc;"></div>
<span class="t" style="left:248.30px;top:551.84px;font-size:12px;transform:scaleX(0.8860);">LABEL 35</span>
<span class="t" style="left:1093.55px;top:551.84px;font-size:12px;transform:scaleX(0.8850);">35,0000 €</span>
<span class="t" style="left:1318.63px;top:551.84px;font-size:12px;transform:scaleX(0.8850);">20,00 %</span>
<span class="t" style="left:1395.55px;top:551.84px;font-size:12px;transform:scaleX(0.8850);">35,0000 €</span>
<span class="t" style="left:1495.55px;top:551.84px;font-size:12px;transform:scaleX(0.8850);">42,0000 €</span>
<span class="t" style="left:1613.77px;top:551.84px;font-size:12px;transform:scaleX(0.8850);">7,00 €</span>
<div style="left:821px;top:548px;width:1px;height:20px;background:#858585;"></div>
<div style="left:861px;top:548px;width:1px;height:20px;background:#858585;"></div>
<div style="left:901px;top:548px;width:1px;height:20px;background:#858585;"></div>
<div style="left:953px;top:548px;width:1px;height:20px;background:#858585;"></div>
<div style="left:1053px;top:548px;width:1px;height:20px;background:#858585;"></div>
<div style="left:1145px;top:548px;width:1px;height:20px;background:#858585;"></div>
<div style="left:1245px;top:548px;width:1px;height:20px;background:#858585;"></div>
<div style="left:1302px;top:548px;width:1px;height:20px;background:#858585;"></div>
<div style="left:1362px;top:548px;width:1px;height:20px;background:#858585;"></div>
<div style="left:1447px;top:548px;width:1px;height:20px;background:#858585;"></div>
<div style="left:1547px;top:548px;width:1px;height:20px;background:#858585;"></div>
<div style="left:247px;top:567px;width:1401px;height:1px;background:#858585;"></div>
<div style="left:247px;top:568px;width:1401px;height:19px;background:#dcdcdc;"></div>
<span class="t" style="left:248.30px;top:571.84px;font-size:12px;transform:scaleX(0.8860);">LABEL 36</span>
<span class="t" style="left:1093.55px;top:571.84px;font-size:12px;transform:scaleX(0.8850);">36,0000 €</span>
<span class="t" style="left:1318.63px;top:571.84px;font-size:12px;transform:scaleX(0.8850);">20,00 %</span>
<span class="t" style="left:1395.55px;top:571.84px;font-size:12px;transform:scaleX(0.8850);">36,0000 €</span>
<span class="t" style="left:1495.55px;top:571.84px;font-size:12px;transform:scaleX(0.8850);">43,2000 €</span>
<span class="t" style="left:1613.77px;top:571.84px;font-size:12px;transform:scaleX(0.8850);">7,20 €</span>
<div style="left:821px;top:568px;width:1px;height:20px;background:#858585;"></div>
<div style="left:861px;top:568px;width:1px;height:20px;background:#858585;"></div>
<div style="left:901px;top:568px;width:1px;height:20px;background:#858585;"></div>
<div style="left:953px;top:568px;width:1px;height:20px;background:#858585;"></div>
<div style="left:1053px;top:568px;width:1px;height:20px;background:#858585;"></div>
<div style="left:1145px;top:568px;width:1px;height:20px;background:#858585;"></div>
<div style="left:1245px;top:568px;width:1px;height:20px;background:#858585;"></div>
<div style="left:1302px;top:568px;width:1px;height:20px;background:#858585;"></div>
<div style="left:1362px;top:568px;width:1px;height:20px;background:#858585;"></div>
<div style="left:1447px;top:568px;width:1px;height:20px;background:#858585;"></div>
<div style="left:1547px;top:568px;width:1px;height:20px;background:#858585;"></div>
<div style="left:247px;top:587px;width:1401px;height:1px;background:#858585;"></div>
<div style="left:247px;top:588px;width:1401px;height:19px;background:#dcdcdc;"></div>
<span class="t" style="left:248.30px;top:591.84px;font-size:12px;transform:scaleX(0.8860);">LABEL 37</span>
<span class="t" style="left:1093.55px;top:591.84px;font-size:12px;transform:scaleX(0.8850);">37,0000 €</span>
<span class="t" style="left:1318.63px;top:591.84px;font-size:12px;transform:scaleX(0.8850);">20,00 %</span>
<span class="t" style="left:1395.55px;top:591.84px;font-size:12px;transform:scaleX(0.8850);">37,0000 €</span>
<span class="t" style="left:1495.55px;top:591.84px;font-size:12px;transform:scaleX(0.8850);">44,4000 €</span>
<span class="t" style="left:1613.77px;top:591.84px;font-size:12px;transform:scaleX(0.8850);">7,40 €</span>
<div style="left:821px;top:588px;width:1px;height:20px;background:#858585;"></div>
<div style="left:861px;top:588px;width:1px;height:20px;background:#858585;"></div>
<div style="left:901px;top:588px;width:1px;height:20px;background:#858585;"></div>
<div style="left:953px;top:588px;width:1px;height:20px;background:#858585;"></div>
<div style="left:1053px;top:588px;width:1px;height:20px;background:#858585;"></div>
<div style="left:1145px;top:588px;width:1px;height:20px;background:#858585;"></div>
<div style="left:1245px;top:588px;width:1px;height:20px;background:#858585;"></div>
<div style="left:1302px;top:588px;width:1px;height:20px;background:#858585;"></div>
<div style="left:1362px;top:588px;width:1px;height:20px;background:#858585;"></div>
<div style="left:1447px;top:588px;width:1px;height:20px;background:#858585;"></div>
<div style="left:1547px;top:588px;width:1px;height:20px;background:#858585;"></div>
<div style="left:247px;top:607px;width:1401px;height:1px;background:#858585;"></div>
<div style="left:247px;top:608px;width:1401px;height:19px;background:#dcdcdc;"></div>
<span class="t" style="left:248.30px;top:611.84px;font-size:12px;transform:scaleX(0.8860);">LABEL 38</span>
<span class="t" style="left:1093.55px;top:611.84px;font-size:12px;transform:scaleX(0.8850);">38,0000 €</span>
<span class="t" style="left:1318.63px;top:611.84px;font-size:12px;transform:scaleX(0.8850);">20,00 %</span>
<span class="t" style="left:1395.55px;top:611.84px;font-size:12px;transform:scaleX(0.8850);">38,0000 €</span>
<span class="t" style="left:1495.55px;top:611.84px;font-size:12px;transform:scaleX(0.8850);">45,6000 €</span>
<span class="t" style="left:1613.77px;top:611.84px;font-size:12px;transform:scaleX(0.8850);">7,60 €</span>
<div style="left:821px;top:608px;width:1px;height:20px;background:#858585;"></div>
<div style="left:861px;top:608px;width:1px;height:20px;background:#858585;"></div>
<div style="left:901px;top:608px;width:1px;height:20px;background:#858585;"></div>
<div style="left:953px;top:608px;width:1px;height:20px;background:#858585;"></div>
<div style="left:1053px;top:608px;width:1px;height:20px;background:#858585;"></div>
<div style="left:1145px;top:608px;width:1px;height:20px;background:#858585;"></div>
<div style="left:1245px;top:608px;width:1px;height:20px;background:#858585;"></div>
<div style="left:1302px;top:608px;width:1px;height:20px;background:#858585;"></div>
<div style="left:1362px;top:608px;width:1px;height:20px;background:#858585;"></div>
<div style="left:1447px;top:608px;width:1px;height:20px;background:#858585;"></div>
<div style="left:1547px;top:608px;width:1px;height:20px;background:#858585;"></div>
<div style="left:247px;top:627px;width:1401px;height:1px;background:#858585;"></div>
<div style="left:247px;top:628px;width:1401px;height:19px;background:#dcdcdc;"></div>
<span class="t" style="left:248.30px;top:631.84px;font-size:12px;transform:scaleX(0.8860);">LABEL 39</span>
<span class="t" style="left:1093.55px;top:631.84px;font-size:12px;transform:scaleX(0.8850);">39,0000 €</span>
<span class="t" style="left:1318.63px;top:631.84px;font-size:12px;transform:scaleX(0.8850);">20,00 %</span>
<span class="t" style="left:1395.55px;top:631.84px;font-size:12px;transform:scaleX(0.8850);">39,0000 €</span>
<span class="t" style="left:1495.55px;top:631.84px;font-size:12px;transform:scaleX(0.8850);">46,8000 €</span>
<span class="t" style="left:1613.77px;top:631.84px;font-size:12px;transform:scaleX(0.8850);">7,80 €</span>
<div style="left:821px;top:628px;width:1px;height:20px;background:#858585;"></div>
<div style="left:861px;top:628px;width:1px;height:20px;background:#858585;"></div>
<div style="left:901px;top:628px;width:1px;height:20px;background:#858585;"></div>
<div style="left:953px;top:628px;width:1px;height:20px;background:#858585;"></div>
<div style="left:1053px;top:628px;width:1px;height:20px;background:#858585;"></div>
<div style="left:1145px;top:628px;width:1px;height:20px;background:#858585;"></div>
<div style="left:1245px;top:628px;width:1px;height:20px;background:#858585;"></div>
<div style="left:1302px;top:628px;width:1px;height:20px;background:#858585;"></div>
<div style="left:1362px;top:628px;width:1px;height:20px;background:#858585;"></div>
<div style="left:1447px;top:628px;width:1px;height:20px;background:#858585;"></div>
<div style="left:1547px;top:628px;width:1px;height:20px;background:#858585;"></div>
<div style="left:247px;top:647px;width:1401px;height:1px;background:#858585;"></div>
<div style="left:247px;top:648px;width:1401px;height:19px;background:#ffffff;"></div>
<span class="t" style="left:1318.63px;top:651.84px;font-size:12px;transform:scaleX(0.8850);">20,00 %</span>
<div style="left:821px;top:648px;width:1px;height:20px;background:#858585;"></div>
<div style="left:861px;top:648px;width:1px;height:20px;background:#858585;"></div>
<div style="left:901px;top:648px;width:1px;height:20px;background:#858585;"></div>
<div style="left:953px;top:648px;width:1px;height:20px;background:#858585;"></div>
<div style="left:1053px;top:648px;width:1px;height:20px;background:#858585;"></div>
<div style="left:1145px;top:648px;width:1px;height:20px;background:#858585;"></div>
<div style="left:1245px;top:648px;width:1px;height:20px;background:#858585;"></div>
<div style="left:1302px;top:648px;width:1px;height:20px;background:#858585;"></div>
<div style="left:1362px;top:648px;width:1px;height:20px;background:#858585;"></div>
<div style="left:1447px;top:648px;width:1px;height:20px;background:#858585;"></div>
<div style="left:1547px;top:648px;width:1px;height:20px;background:#858585;"></div>
<div style="left:247px;top:667px;width:1401px;height:1px;background:#858585;"></div>
<div style="left:247px;top:668px;width:1401px;height:19px;background:#f4f4f4;"></div>
<span class="t" style="left:1451.50px;top:671.84px;font-size:12px;transform:scaleX(0.9070);font-weight:bold;">Sous Total ... POULETS :</span>
<span class="t" style="left:1594.40px;top:671.84px;font-size:12px;transform:scaleX(1.0190);font-weight:bold;">185,00 €</span>
<div style="left:247px;top:687px;width:1401px;height:1px;background:#858585;"></div>
<div style="left:247px;top:688px;width:1401px;height:19px;background:#ffffff;"></div>
<div style="left:821px;top:688px;width:1px;height:20px;background:#858585;"></div>
<div style="left:861px;top:688px;width:1px;height:20px;background:#858585;"></div>
<div style="left:901px;top:688px;width:1px;height:20px;background:#858585;"></div>
<div style="left:953px;top:688px;width:1px;height:20px;background:#858585;"></div>
<div style="left:1053px;top:688px;width:1px;height:20px;background:#858585;"></div>
<div style="left:1145px;top:688px;width:1px;height:20px;background:#858585;"></div>
<div style="left:1245px;top:688px;width:1px;height:20px;background:#858585;"></div>
<div style="left:1302px;top:688px;width:1px;height:20px;background:#858585;"></div>
<div style="left:1362px;top:688px;width:1px;height:20px;background:#858585;"></div>
<div style="left:1447px;top:688px;width:1px;height:20px;background:#858585;"></div>
<div style="left:1547px;top:688px;width:1px;height:20px;background:#858585;"></div>
<div style="left:247px;top:707px;width:1401px;height:1px;background:#858585;"></div>
<div style="left:247px;top:708px;width:1401px;height:19px;background:#f4f4f4;"></div>
<div style="left:821px;top:708px;width:1px;height:20px;background:#858585;"></div>
<div style="left:861px;top:708px;width:1px;height:20px;background:#858585;"></div>
<div style="left:901px;top:708px;width:1px;height:20px;background:#858585;"></div>
<div style="left:953px;top:708px;width:1px;height:20px;background:#858585;"></div>
<div style="left:1053px;top:708px;width:1px;height:20px;background:#858585;"></div>
<div style="left:1145px;top:708px;width:1px;height:20px;background:#858585;"></div>
<div style="left:1245px;top:708px;width:1px;height:20px;background:#858585;"></div>
<div style="left:1302px;top:708px;width:1px;height:20px;background:#858585;"></div>
<div style="left:1362px;top:708px;width:1px;height:20px;background:#858585;"></div>
<div style="left:1447px;top:708px;width:1px;height:20px;background:#858585;"></div>
<div style="left:1547px;top:708px;width:1px;height:20px;background:#858585;"></div>
<div style="left:247px;top:727px;width:1401px;height:1px;background:#858585;"></div>
<div style="left:247px;top:728px;width:1401px;height:19px;background:#ffffff;"></div>
<div style="left:821px;top:728px;width:1px;height:20px;background:#858585;"></div>
<div style="left:861px;top:728px;width:1px;height:20px;background:#858585;"></div>
<div style="left:901px;top:728px;width:1px;height:20px;background:#858585;"></div>
<div style="left:953px;top:728px;width:1px;height:20px;background:#858585;"></div>
<div style="left:1053px;top:728px;width:1px;height:20px;background:#858585;"></div>
<div style="left:1145px;top:728px;width:1px;height:20px;background:#858585;"></div>
<div style="left:1245px;top:728px;width:1px;height:20px;background:#858585;"></div>
<div style="left:1302px;top:728px;width:1px;height:20px;background:#858585;"></div>
<div style="left:1362px;top:728px;width:1px;height:20px;background:#858585;"></div>
<div style="left:1447px;top:728px;width:1px;height:20px;background:#858585;"></div>
<div style="left:1547px;top:728px;width:1px;height:20px;background:#858585;"></div>
<div style="left:247px;top:747px;width:1401px;height:1px;background:#858585;"></div>
<div style="left:247px;top:748px;width:1401px;height:19px;background:#f4f4f4;"></div>
<div style="left:821px;top:748px;width:1px;height:20px;background:#858585;"></div>
<div style="left:861px;top:748px;width:1px;height:20px;background:#858585;"></div>
<div style="left:901px;top:748px;width:1px;height:20px;background:#858585;"></div>
<div style="left:953px;top:748px;width:1px;height:20px;background:#858585;"></div>
<div style="left:1053px;top:748px;width:1px;height:20px;background:#858585;"></div>
<div style="left:1145px;top:748px;width:1px;height:20px;background:#858585;"></div>
<div style="left:1245px;top:748px;width:1px;height:20px;background:#858585;"></div>
<div style="left:1302px;top:748px;width:1px;height:20px;background:#858585;"></div>
<div style="left:1362px;top:748px;width:1px;height:20px;background:#858585;"></div>
<div style="left:1447px;top:748px;width:1px;height:20px;background:#858585;"></div>
<div style="left:1547px;top:748px;width:1px;height:20px;background:#858585;"></div>
<div style="left:247px;top:767px;width:1401px;height:1px;background:#858585;"></div>
<div style="left:247px;top:768px;width:1401px;height:19px;background:#ffffff;"></div>
<div style="left:821px;top:768px;width:1px;height:20px;background:#858585;"></div>
<div style="left:861px;top:768px;width:1px;height:20px;background:#858585;"></div>
<div style="left:901px;top:768px;width:1px;height:20px;background:#858585;"></div>
<div style="left:953px;top:768px;width:1px;height:20px;background:#858585;"></div>
<div style="left:1053px;top:768px;width:1px;height:20px;background:#858585;"></div>
<div style="left:1145px;top:768px;width:1px;height:20px;background:#858585;"></div>
<div style="left:1245px;top:768px;width:1px;height:20px;background:#858585;"></div>
<div style="left:1302px;top:768px;width:1px;height:20px;background:#858585;"></div>
<div style="left:1362px;top:768px;width:1px;height:20px;background:#858585;"></div>
<div style="left:1447px;top:768px;width:1px;height:20px;background:#858585;"></div>
<div style="left:1547px;top:768px;width:1px;height:20px;background:#858585;"></div>
<div style="left:247px;top:787px;width:1401px;height:1px;background:#858585;"></div>
<div style="left:247px;top:788px;width:1401px;height:19px;background:#f4f4f4;"></div>
<div style="left:821px;top:788px;width:1px;height:20px;background:#858585;"></div>
<div style="left:861px;top:788px;width:1px;height:20px;background:#858585;"></div>
<div style="left:901px;top:788px;width:1px;height:20px;background:#858585;"></div>
<div style="left:953px;top:788px;width:1px;height:20px;background:#858585;"></div>
<div style="left:1053px;top:788px;width:1px;height:20px;background:#858585;"></div>
<div style="left:1145px;top:788px;width:1px;height:20px;background:#858585;"></div>
<div style="left:1245px;top:788px;width:1px;height:20px;background:#858585;"></div>
<div style="left:1302px;top:788px;width:1px;height:20px;background:#858585;"></div>
<div style="left:1362px;top:788px;width:1px;height:20px;background:#858585;"></div>
<div style="left:1447px;top:788px;width:1px;height:20px;background:#858585;"></div>
<div style="left:1547px;top:788px;width:1px;height:20px;background:#858585;"></div>
<div style="left:247px;top:807px;width:1401px;height:1px;background:#858585;"></div>
<div style="left:247px;top:808px;width:1401px;height:19px;background:#ffffff;"></div>
<div style="left:821px;top:808px;width:1px;height:20px;background:#858585;"></div>
<div style="left:861px;top:808px;width:1px;height:20px;background:#858585;"></div>
<div style="left:901px;top:808px;width:1px;height:20px;background:#858585;"></div>
<div style="left:953px;top:808px;width:1px;height:20px;background:#858585;"></div>
<div style="left:1053px;top:808px;width:1px;height:20px;background:#858585;"></div>
<div style="left:1145px;top:808px;width:1px;height:20px;background:#858585;"></div>
<div style="left:1245px;top:808px;width:1px;height:20px;background:#858585;"></div>
<div style="left:1302px;top:808px;width:1px;height:20px;background:#858585;"></div>
<div style="left:1362px;top:808px;width:1px;height:20px;background:#858585;"></div>
<div style="left:1447px;top:808px;width:1px;height:20px;background:#858585;"></div>
<div style="left:1547px;top:808px;width:1px;height:20px;background:#858585;"></div>
<div style="left:247px;top:827px;width:1401px;height:1px;background:#858585;"></div>
<div style="left:247px;top:828px;width:1401px;height:19px;background:#f4f4f4;"></div>
<div style="left:821px;top:828px;width:1px;height:20px;background:#858585;"></div>
<div style="left:861px;top:828px;width:1px;height:20px;background:#858585;"></div>
<div style="left:901px;top:828px;width:1px;height:20px;background:#858585;"></div>
<div style="left:953px;top:828px;width:1px;height:20px;background:#858585;"></div>
<div style="left:1053px;top:828px;width:1px;height:20px;background:#858585;"></div>
<div style="left:1145px;top:828px;width:1px;height:20px;background:#858585;"></div>
<div style="left:1245px;top:828px;width:1px;height:20px;background:#858585;"></div>
<div style="left:1302px;top:828px;width:1px;height:20px;background:#858585;"></div>
<div style="left:1362px;top:828px;width:1px;height:20px;background:#858585;"></div>
<div style="left:1447px;top:828px;width:1px;height:20px;background:#858585;"></div>
<div style="left:1547px;top:828px;width:1px;height:20px;background:#858585;"></div>
<div style="left:247px;top:847px;width:1401px;height:1px;background:#858585;"></div>
<div style="left:247px;top:848px;width:1401px;height:19px;background:#ffffff;"></div>
<div style="left:821px;top:848px;width:1px;height:20px;background:#858585;"></div>
<div style="left:861px;top:848px;width:1px;height:20px;background:#858585;"></div>
<div style="left:901px;top:848px;width:1px;height:20px;background:#858585;"></div>
<div style="left:953px;top:848px;width:1px;height:20px;background:#858585;"></div>
<div style="left:1053px;top:848px;width:1px;height:20px;background:#858585;"></div>
<div style="left:1145px;top:848px;width:1px;height:20px;background:#858585;"></div>
<div style="left:1245px;top:848px;width:1px;height:20px;background:#858585;"></div>
<div style="left:1302px;top:848px;width:1px;height:20px;background:#858585;"></div>
<div style="left:1362px;top:848px;width:1px;height:20px;background:#858585;"></div>
<div style="left:1447px;top:848px;width:1px;height:20px;background:#858585;"></div>
<div style="left:1547px;top:848px;width:1px;height:20px;background:#858585;"></div>
<div style="left:247px;top:867px;width:1401px;height:1px;background:#858585;"></div>
<div style="left:247px;top:868px;width:1401px;height:19px;background:#f4f4f4;"></div>
<div style="left:821px;top:868px;width:1px;height:20px;background:#858585;"></div>
<div style="left:861px;top:868px;width:1px;height:20px;background:#858585;"></div>
<div style="left:901px;top:868px;width:1px;height:20px;background:#858585;"></div>
<div style="left:953px;top:868px;width:1px;height:20px;background:#858585;"></div>
<div style="left:1053px;top:868px;width:1px;height:20px;background:#858585;"></div>
<div style="left:1145px;top:868px;width:1px;height:20px;background:#858585;"></div>
<div style="left:1245px;top:868px;width:1px;height:20px;background:#858585;"></div>
<div style="left:1302px;top:868px;width:1px;height:20px;background:#858585;"></div>
<div style="left:1362px;top:868px;width:1px;height:20px;background:#858585;"></div>
<div style="left:1447px;top:868px;width:1px;height:20px;background:#858585;"></div>
<div style="left:1547px;top:868px;width:1px;height:20px;background:#858585;"></div>
<div style="left:247px;top:887px;width:1401px;height:1px;background:#858585;"></div>
<div style="left:247px;top:888px;width:1401px;height:19px;background:#ffffff;"></div>
<div style="left:821px;top:888px;width:1px;height:20px;background:#858585;"></div>
<div style="left:861px;top:888px;width:1px;height:20px;background:#858585;"></div>
<div style="left:901px;top:888px;width:1px;height:20px;background:#858585;"></div>
<div style="left:953px;top:888px;width:1px;height:20px;background:#858585;"></div>
<div style="left:1053px;top:888px;width:1px;height:20px;background:#858585;"></div>
<div style="left:1145px;top:888px;width:1px;height:20px;background:#858585;"></div>
<div style="left:1245px;top:888px;width:1px;height:20px;background:#858585;"></div>
<div style="left:1302px;top:888px;width:1px;height:20px;background:#858585;"></div>
<div style="left:1362px;top:888px;width:1px;height:20px;background:#858585;"></div>
<div style="left:1447px;top:888px;width:1px;height:20px;background:#858585;"></div>
<div style="left:1547px;top:888px;width:1px;height:20px;background:#858585;"></div>
<div style="left:247px;top:907px;width:1401px;height:1px;background:#858585;"></div>
<div style="left:247px;top:908px;width:1401px;height:19px;background:#f4f4f4;"></div>
<div style="left:821px;top:908px;width:1px;height:20px;background:#858585;"></div>
<div style="left:861px;top:908px;width:1px;height:20px;background:#858585;"></div>
<div style="left:901px;top:908px;width:1px;height:20px;background:#858585;"></div>
<div style="left:953px;top:908px;width:1px;height:20px;background:#858585;"></div>
<div style="left:1053px;top:908px;width:1px;height:20px;background:#858585;"></div>
<div style="left:1145px;top:908px;width:1px;height:20px;background:#858585;"></div>
<div style="left:1245px;top:908px;width:1px;height:20px;background:#858585;"></div>
<div style="left:1302px;top:908px;width:1px;height:20px;background:#858585;"></div>
<div style="left:1362px;top:908px;width:1px;height:20px;background:#858585;"></div>
<div style="left:1447px;top:908px;width:1px;height:20px;background:#858585;"></div>
<div style="left:1547px;top:908px;width:1px;height:20px;background:#858585;"></div>
<div style="left:247px;top:927px;width:1401px;height:1px;background:#858585;"></div>
<div style="left:247px;top:928px;width:1401px;height:19px;background:#ffffff;"></div>
<div style="left:821px;top:928px;width:1px;height:20px;background:#858585;"></div>
<div style="left:861px;top:928px;width:1px;height:20px;background:#858585;"></div>
<div style="left:901px;top:928px;width:1px;height:20px;background:#858585;"></div>
<div style="left:953px;top:928px;width:1px;height:20px;background:#858585;"></div>
<div style="left:1053px;top:928px;width:1px;height:20px;background:#858585;"></div>
<div style="left:1145px;top:928px;width:1px;height:20px;background:#858585;"></div>
<div style="left:1245px;top:928px;width:1px;height:20px;background:#858585;"></div>
<div style="left:1302px;top:928px;width:1px;height:20px;background:#858585;"></div>
<div style="left:1362px;top:928px;width:1px;height:20px;background:#858585;"></div>
<div style="left:1447px;top:928px;width:1px;height:20px;background:#858585;"></div>
<div style="left:1547px;top:928px;width:1px;height:20px;background:#858585;"></div>
<div style="left:247px;top:947px;width:1401px;height:1px;background:#858585;"></div>
<div style="left:247px;top:948px;width:1401px;height:19px;background:#f4f4f4;"></div>
<div style="left:821px;top:948px;width:1px;height:20px;background:#858585;"></div>
<div style="left:861px;top:948px;width:1px;height:20px;background:#858585;"></div>
<div style="left:901px;top:948px;width:1px;height:20px;background:#858585;"></div>
<div style="left:953px;top:948px;width:1px;height:20px;background:#858585;"></div>
<div style="left:1053px;top:948px;width:1px;height:20px;background:#858585;"></div>
<div style="left:1145px;top:948px;width:1px;height:20px;background:#858585;"></div>
<div style="left:1245px;top:948px;width:1px;height:20px;background:#858585;"></div>
<div style="left:1302px;top:948px;width:1px;height:20px;background:#858585;"></div>
<div style="left:1362px;top:948px;width:1px;height:20px;background:#858585;"></div>
<div style="left:1447px;top:948px;width:1px;height:20px;background:#858585;"></div>
<div style="left:1547px;top:948px;width:1px;height:20px;background:#858585;"></div>
<div style="left:247px;top:967px;width:1401px;height:1px;background:#858585;"></div>
<div style="left:247px;top:968px;width:1401px;height:19px;background:#ffffff;"></div>
<div style="left:821px;top:968px;width:1px;height:20px;background:#858585;"></div>
<div style="left:861px;top:968px;width:1px;height:20px;background:#858585;"></div>
<div style="left:901px;top:968px;width:1px;height:20px;background:#858585;"></div>
<div style="left:953px;top:968px;width:1px;height:20px;background:#858585;"></div>
<div style="left:1053px;top:968px;width:1px;height:20px;background:#858585;"></div>
<div style="left:1145px;top:968px;width:1px;height:20px;background:#858585;"></div>
<div style="left:1245px;top:968px;width:1px;height:20px;background:#858585;"></div>
<div style="left:1302px;top:968px;width:1px;height:20px;background:#858585;"></div>
<div style="left:1362px;top:968px;width:1px;height:20px;background:#858585;"></div>
<div style="left:1447px;top:968px;width:1px;height:20px;background:#858585;"></div>
<div style="left:1547px;top:968px;width:1px;height:20px;background:#858585;"></div>
<div style="left:247px;top:987px;width:1401px;height:1px;background:#858585;"></div>
<div style="left:247px;top:988px;width:1401px;height:19px;background:#f4f4f4;"></div>
<div style="left:821px;top:988px;width:1px;height:20px;background:#858585;"></div>
<div style="left:861px;top:988px;width:1px;height:20px;background:#858585;"></div>
<div style="left:901px;top:988px;width:1px;height:20px;background:#858585;"></div>
<div style="left:953px;top:988px;width:1px;height:20px;background:#858585;"></div>
<div style="left:1053px;top:988px;width:1px;height:20px;background:#858585;"></div>
<div style="left:1145px;top:988px;width:1px;height:20px;background:#858585;"></div>
<div style="left:1245px;top:988px;width:1px;height:20px;background:#858585;"></div>
<div style="left:1302px;top:988px;width:1px;height:20px;background:#858585;"></div>
<div style="left:1362px;top:988px;width:1px;height:20px;background:#858585;"></div>
<div style="left:1447px;top:988px;width:1px;height:20px;background:#858585;"></div>
<div style="left:1547px;top:988px;width:1px;height:20px;background:#858585;"></div>
<div style="left:247px;top:1007px;width:1401px;height:1px;background:#858585;"></div>
<div style="left:247px;top:1008px;width:1401px;height:6px;background:#ffffff;"></div>
<div style="left:821px;top:1008px;width:1px;height:6px;background:#858585;"></div>
<div style="left:861px;top:1008px;width:1px;height:6px;background:#858585;"></div>
<div style="left:901px;top:1008px;width:1px;height:6px;background:#858585;"></div>
<div style="left:953px;top:1008px;width:1px;height:6px;background:#858585;"></div>
<div style="left:1053px;top:1008px;width:1px;height:6px;background:#858585;"></div>
<div style="left:1145px;top:1008px;width:1px;height:6px;background:#858585;"></div>
<div style="left:1245px;top:1008px;width:1px;height:6px;background:#858585;"></div>
<div style="left:1302px;top:1008px;width:1px;height:6px;background:#858585;"></div>
<div style="left:1362px;top:1008px;width:1px;height:6px;background:#858585;"></div>
<div style="left:1447px;top:1008px;width:1px;height:6px;background:#858585;"></div>
<div style="left:1547px;top:1008px;width:1px;height:6px;background:#858585;"></div>
<div style="left:1647px;top:528px;width:1px;height:506px;background:#858585;"></div>
<div style="left:247px;top:1014px;width:1401px;height:1px;background:#7a7a7a;"></div>
<div style="left:247px;top:1015px;width:1401px;height:19px;background:#ffffff;"></div>
<div style="left:247px;top:1034px;width:1401px;height:1px;background:#9a9a9a;"></div>
<div style="left:1362px;top:1015px;width:1px;height:19px;background:#858585;"></div>
<div style="left:1447px;top:1015px;width:1px;height:19px;background:#858585;"></div>
<div style="left:1547px;top:1015px;width:1px;height:19px;background:#858585;"></div>
<span class="t" style="left:248.40px;top:1019.24px;font-size:12px;transform:scaleX(0.9512);">Total HT</span>
<span class="t" style="left:1389.05px;top:1019.24px;font-size:12px;transform:scaleX(0.8850);">185,0000 €</span>
<span class="t" style="left:1489.05px;top:1019.24px;font-size:12px;transform:scaleX(0.8850);">222,0000 €</span>
<span class="t" style="left:1607.27px;top:1019.24px;font-size:12px;transform:scaleX(0.8850);">37,00 €</span>
<div style="left:242.6px;top:525.3px;width:1414.2px;height:184.4px;border:4px solid #0db960;box-sizing:border-box;background:none"></div>
<div style="left:636px;top:481.5px;width:46px;height:46px;border-radius:50%;background:#0db960"></div>
<span class="t" style="left:651.01px;top:490.70px;font-size:28px;font-weight:bold;color:#fff;">2</span>
</body></html>
